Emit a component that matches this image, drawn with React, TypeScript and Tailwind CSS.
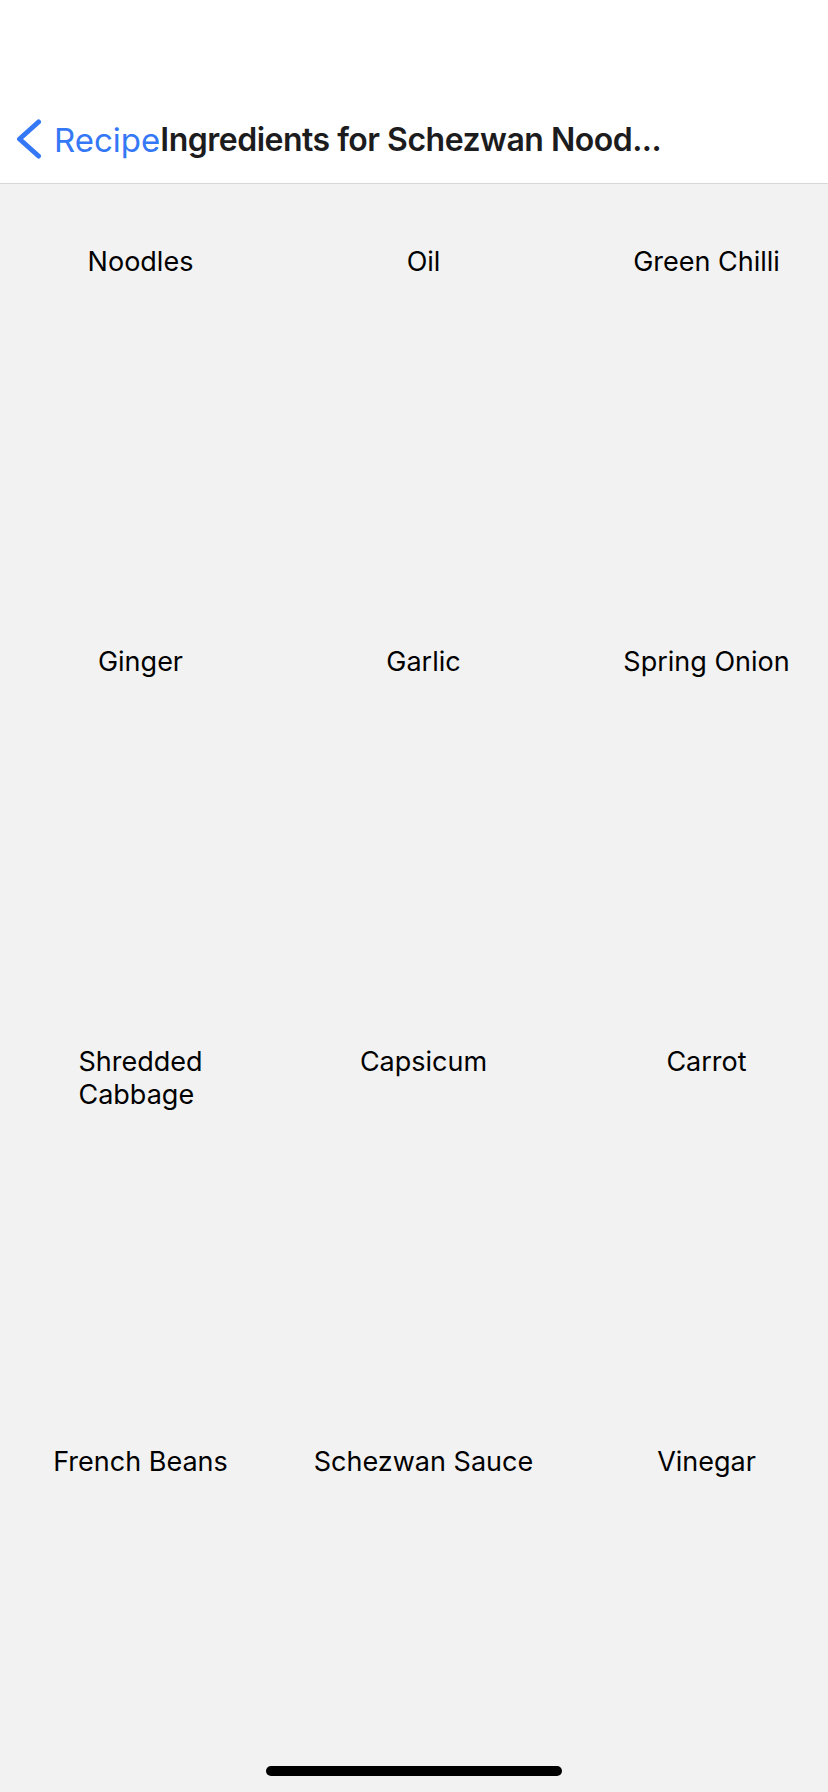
const ingredients = [
  "Noodles",
  "Oil",
  "Green Chilli",
  "Ginger",
  "Garlic",
  "Spring Onion",
  "Shredded\nCabbage",
  "Capsicum",
  "Carrot",
  "French Beans",
  "Schezwan Sauce",
  "Vinegar",
];

function BackChevron() {
  return (
    <svg width="28" height="44" viewBox="0 0 28 44" fill="none" className="ml-[14px] shrink-0">
      <path
        d="M24.5 4 L5.5 21 L24.5 38"
        stroke="#3478f6"
        strokeWidth="5"
        strokeLinecap="round"
        strokeLinejoin="round"
      />
    </svg>
  );
}

export default function App() {
  return (
    <div
      className="relative min-h-[1792px] w-[828px] overflow-hidden bg-[#f2f2f2]"
      style={{ fontFamily: "Inter, 'Noto Sans', sans-serif" }}
    >
      {/* Nav bar */}
      <header className="h-[184px] bg-white border-b border-[#d8d8d8] pt-[96px]">
        <div className="flex items-center h-[88px]">
          <BackChevron />
          <span className="ml-[12px] text-[33px] leading-none text-[#3478f6]">Recipe</span>
          <span className="text-[32px] leading-none font-semibold text-[#1c1c1e] tracking-[-0.5px]">
            Ingredients for Schezwan Nood...
          </span>
        </div>
      </header>

      {/* Ingredient grid */}
      <div className="grid grid-cols-[repeat(3,281px)] gap-x-[2px]">
        {ingredients.map((name, i) => (
          <div key={i} className="h-[400px] pt-[61px] flex justify-center">
            <p className="text-[27px] leading-[33px] text-black whitespace-pre-line text-left">
              {name}
            </p>
          </div>
        ))}
      </div>

      {/* Home indicator */}
      <div className="absolute bottom-[16px] left-1/2 -translate-x-1/2 w-[296px] h-[10px] rounded-full bg-black" />
    </div>
  );
}
